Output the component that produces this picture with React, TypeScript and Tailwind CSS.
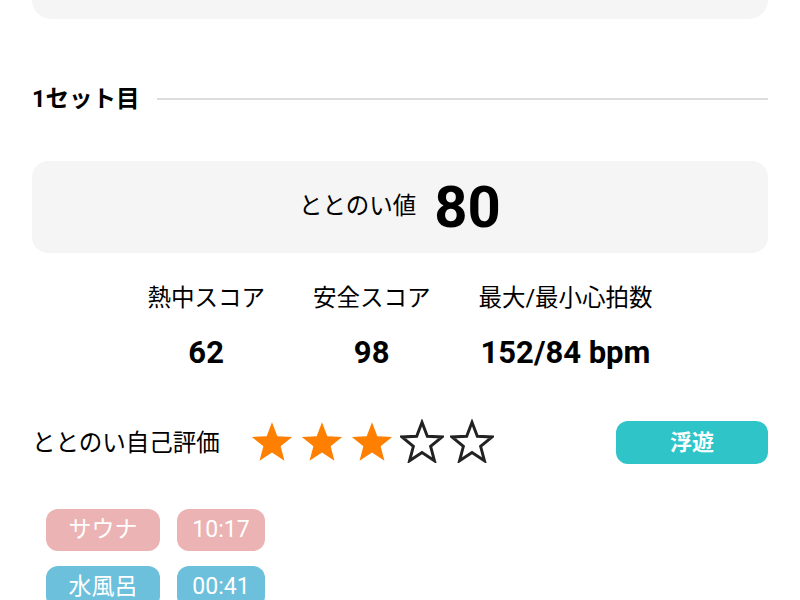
import { Fragment } from 'react';

const font = { fontFamily: 'Roboto, "Noto Sans CJK JP", sans-serif' };

function Star({ filled }: { filled: boolean }) {
  return (
    <svg width="44" height="44" viewBox="0 0 24 24">
      <path
        d="M12 1.8l2.9 7.6 8.1.4-6.3 5.1 2.1 7.9L12 18.3l-6.8 4.5 2.1-7.9L1 9.8l8.1-.4z"
        fill={filled ? '#ff7f00' : 'none'}
        stroke={filled ? 'none' : '#222'}
        strokeWidth={filled ? 0 : 1.6}
        strokeLinejoin="miter"
      />
    </svg>
  );
}

const stats = [
  { label: '熱中スコア', value: '62' },
  { label: '安全スコア', value: '98' },
  { label: '最大/最小心拍数', value: '152/84 bpm' },
];

const phases = [
  { name: 'サウナ', time: '10:17', color: 'bg-[#ebb3b3]' },
  { name: '水風呂', time: '00:41', color: 'bg-[#6cc0dc]' },
];

export default function App() {
  return (
    <div className="w-[800px] h-[600px] overflow-hidden bg-white text-black" style={font}>
      <div className="px-8">
        {/* previous card, scrolled off */}
        <div className="h-[19px] rounded-b-[20px] bg-[#f5f5f5]" />

        {/* set header */}
        <div className="mt-[64px] flex items-center gap-[18px]">
          <span className="text-[23.5px] font-bold leading-[32px]">1セット目</span>
          <div className="flex-1 h-[2px] bg-[#dcdcdc]" />
        </div>

        {/* score card */}
        <div className="mt-[46px] h-[92px] rounded-2xl bg-[#f5f5f5] flex items-center justify-center gap-[18px]">
          <span className="text-[23.5px]">ととのい値</span>
          <span className="text-[58px] font-bold leading-none">80</span>
        </div>

        {/* stats */}
        <div className="mt-[30px] flex justify-center gap-12">
          {stats.map((s) => (
            <div key={s.label} className="flex flex-col items-center">
              <span className="text-[23.5px] leading-[30px]">{s.label}</span>
              <span className="mt-[24px] text-[31px] font-bold leading-[32px]">{s.value}</span>
            </div>
          ))}
        </div>

        {/* self evaluation */}
        <div className="mt-[52px] flex items-center">
          <span className="text-[23.5px] leading-[30px]">ととのい自己評価</span>
          <div className="ml-[30px] -mt-[4px] flex gap-[6px]">
            {[0, 1, 2, 3, 4].map((i) => (
              <Star key={i} filled={i < 3} />
            ))}
          </div>
          <div className="ml-auto w-[152px] h-[43px] rounded-xl bg-[#2ec4c8] flex items-center justify-center text-white text-[22px] font-bold">
            浮遊
          </div>
        </div>

        {/* phases */}
        <div className="mt-[45px] pl-[14px] grid grid-cols-[114px_88px] gap-x-[17px] gap-y-[15px] w-max">
          {phases.map((p) => (
            <Fragment key={p.name}>
              <div className={`h-[42px] rounded-xl ${p.color} flex items-center justify-center text-white text-[23px]`}>
                {p.name}
              </div>
              <div className={`h-[42px] rounded-xl ${p.color} flex items-center justify-center text-white text-[23px]`}>
                {p.time}
              </div>
            </Fragment>
          ))}
        </div>
      </div>
    </div>
  );
}
